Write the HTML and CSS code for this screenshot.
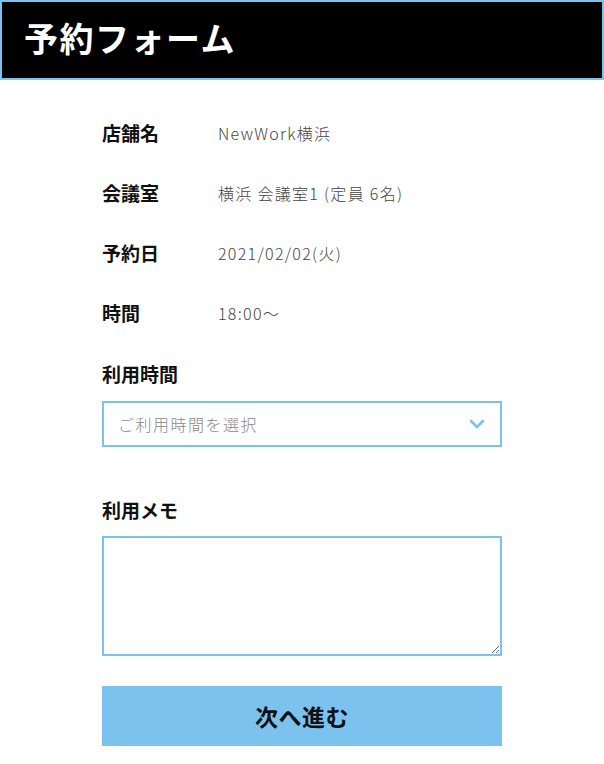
FILE: index.html
```html
<!DOCTYPE html>
<html lang="ja">
<head>
  <meta charset="UTF-8" />
  <meta name="viewport" content="width=device-width, initial-scale=1.0">
  <title>予約フォーム</title>
  <link rel="stylesheet" href="styles.css">
</head>
<body>
  <header class="cabecalho">
    <h1>予約フォーム</h1>
  </header>

  <form class="formulario">
    <div class="linha">
      <span class="rotulo">店舗名</span>
      <span class="valor">NewWork横浜</span>
    </div>
    <div class="linha">
      <span class="rotulo">会議室</span>
      <span class="valor">横浜 会議室1 (定員 6名)</span>
    </div>
    <div class="linha">
      <span class="rotulo">予約日</span>
      <span class="valor">2021/02/02(火)</span>
    </div>
    <div class="linha">
      <span class="rotulo">時間</span>
      <span class="valor">18:00〜</span>
    </div>

    <label class="titulo" for="tempoUso">利用時間</label>
    <div class="caixa-select">
      <select id="tempoUso">
        <option value="">ご利用時間を選択</option>
        <option value="30">30分</option>
        <option value="60">60分</option>
        <option value="90">90分</option>
      </select>
      <svg class="seta" width="16" height="10" viewBox="0 0 16 10">
        <polyline points="2,2 8,8 14,2" fill="none" stroke="#7cc2ee" stroke-width="2.6" stroke-linecap="round" stroke-linejoin="round" />
      </svg>
    </div>

    <label class="titulo memo" for="memo">利用メモ</label>
    <textarea id="memo"></textarea>

    <button type="button">次へ進む</button>
  </form>
</body>
</html>
```

FILE: styles.css
```css
* {
  box-sizing: border-box;
  margin: 0;
  padding: 0;
}

body {
  font-family: "Noto Sans CJK JP", "Noto Sans", sans-serif;
  background-color: #ffffff;
  color: #111;
}

.cabecalho {
  height: 80px;
  background-color: #000;
  border: 2px solid #7cc2ee;
  display: flex;
  align-items: center;
  padding-left: 22px;
}

.cabecalho h1 {
  color: #fff;
  font-size: 34px;
  font-weight: 700;
  line-height: 1;
  letter-spacing: 1.5px;
  margin-top: -4px;
}

.formulario {
  width: 400px;
  margin: 0 auto;
  padding-top: 23px;
}

.linha {
  height: 60px;
  display: flex;
  align-items: center;
}

.rotulo {
  width: 116px;
  font-size: 19px;
  font-weight: 700;
  line-height: 26px;
}

.valor {
  font-size: 16px;
  font-weight: 300;
  letter-spacing: 1.3px;
  color: #444;
  line-height: 26px;
}

.titulo {
  display: block;
  font-size: 19px;
  font-weight: 700;
  line-height: 26px;
  margin-top: 18px;
  margin-bottom: 14px;
}

.titulo.memo {
  margin-top: 50px;
  margin-bottom: 13px;
}

.caixa-select {
  position: relative;
}

select {
  width: 400px;
  height: 46px;
  border: 2px solid #7cc2ee;
  border-radius: 0;
  background-color: #fff;
  appearance: none;
  -webkit-appearance: none;
  padding-left: 14px;
  font-family: inherit;
  font-size: 16px;
  font-weight: 300;
  letter-spacing: 1.5px;
  color: #888;
  outline: none;
}

.seta {
  position: absolute;
  right: 17px;
  top: 18px;
  pointer-events: none;
}

textarea {
  display: block;
  width: 400px;
  height: 120px;
  border: 2px solid #7cc2ee;
  border-radius: 0;
  font-family: inherit;
  font-size: 16px;
  padding: 8px;
  outline: none;
}

button {
  display: block;
  width: 400px;
  height: 60px;
  margin-top: 30px;
  background-color: #7cc2ee;
  border: none;
  font-family: inherit;
  font-size: 23px;
  font-weight: 700;
  letter-spacing: 0.5px;
  color: #111;
  cursor: pointer;
}
```
